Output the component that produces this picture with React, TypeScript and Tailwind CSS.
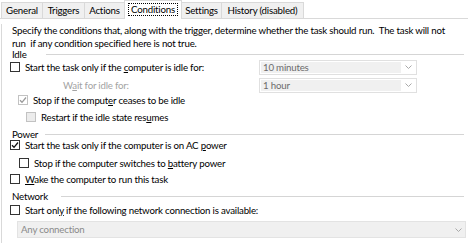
import React from 'react'

const tabs = [
  { label: 'General', w: 'w-[42px]' },
  { label: 'Triggers', w: 'w-[43px]' },
  { label: 'Actions', w: 'w-[41px]' },
  { label: 'Conditions', w: 'w-[58px]', active: true },
  { label: 'Settings', w: 'w-[41px]' },
  { label: 'History (disabled)', w: 'w-[83px]' },
]

function Box({ checked = false, disabled = false, filled = false }: { checked?: boolean; disabled?: boolean; filled?: boolean }) {
  return (
    <span
      className={`flex h-[10px] w-[10px] shrink-0 items-center justify-center border ${
        disabled ? 'border-[#c2c2c2]' : 'border-[#333333]'
      } ${filled ? 'bg-[#ececec]' : 'bg-white'}`}
    >
      {checked && (
        <svg width="8" height="8" viewBox="0 0 8 8">
          <path d="M1 4.3 L3 6.3 L7 1.5" fill="none" stroke={disabled ? '#9a9a9a' : '#111111'} strokeWidth="1.3" />
        </svg>
      )}
    </span>
  )
}

function Chevron() {
  return (
    <svg width="7" height="4" viewBox="0 0 7 4">
      <path d="M0.5 0.5 L3.5 3.5 L6.5 0.5" fill="none" stroke="#a9a9a9" strokeWidth="1" />
    </svg>
  )
}

function Combo({ value }: { value: string }) {
  return (
    <div className="ml-auto mr-[51px] flex h-[15px] w-[158px] border border-[#e0e0e0] bg-white p-[1px]">
      <div className="flex flex-1 items-center bg-[#f0f0f0] pl-[2px] text-[#6b6b6b]">{value}</div>
      <div className="flex w-[14px] items-center justify-center">
        <Chevron />
      </div>
    </div>
  )
}

function Header({ label, w }: { label: string; w: string }) {
  return (
    <div className="flex h-[10px] items-center pl-[10px] pr-[4px] leading-[10px]">
      <span className={`${w} shrink-0`}>{label}</span>
      <div className="h-px flex-1 bg-[#d5d5d5]" />
    </div>
  )
}

export default function App() {
  return (
    <div className="h-[243px] w-[468px] overflow-hidden bg-white font-['Lato',sans-serif] text-[9.7px] leading-[11px] tracking-[-0.2px] text-black">
      {/* Tabs */}
      <div className="flex h-[19px] items-end border-b border-[#d9d9d9] pl-[1px]">
        {tabs.map((t, i) =>
          t.active ? (
            <div
              key={t.label}
              className={`${t.w} relative z-10 -mb-px -ml-px flex h-[19px] items-start justify-center border-x border-t border-[#d9d9d9] bg-white pt-[2px]`}
            >
              <span className="border border-dotted border-black px-[2px] leading-[11px]">{t.label}</span>
            </div>
          ) : (
            <div
              key={t.label}
              className={`${t.w} ${i > 0 ? '-ml-px' : ''} flex h-[16px] items-center justify-center border-x border-t border-[#d9d9d9] bg-[#f0f0f0]`}
            >
              {t.label}
            </div>
          )
        )}
      </div>

      {/* Panel */}
      <div className="ml-[1px] h-[224px] border-l border-[#d9d9d9]">
        <p className="mt-[5px] whitespace-pre pl-[10px] leading-[12.5px]">
          {'Specify the conditions that, along with the trigger, determine whether the task should run.  The task will not'}
          <br />
          {'run  if any condition specified here is not true.'}
        </p>

        <Header label="Idle" w="w-[34px]" />

        <div className="flex h-[16px] items-center gap-[5px] pl-[8px]">
          <Box />
          <span>
            Start the task only if the <u>c</u>omputer is idle for:
          </span>
          <Combo value="10 minutes" />
        </div>

        <div className="mt-[2px] flex h-[16px] items-center pl-[61px]">
          <span className="text-[#a3a3a3]">
            W<u>a</u>it for idle for:
          </span>
          <Combo value="1 hour" />
        </div>

        <div className="flex h-[14px] items-center gap-[5px] pl-[16px]">
          <Box checked disabled />
          <span>
            Stop if the comput<u>e</u>r ceases to be idle
          </span>
        </div>

        <div className="mt-[2px] flex h-[16px] items-center gap-[5px] pl-[24px]">
          <Box disabled filled />
          <span>
            Restart if the idle state res<u>u</u>mes
          </span>
        </div>

        <div className="mt-[4px]">
          <Header label="Power" w="w-[33px]" />
        </div>

        <div className="flex h-[12px] items-center gap-[5px] pl-[8px]">
          <Box checked />
          <span>
            Start the task only if the computer is on AC <u>p</u>ower
          </span>
        </div>

        <div className="mt-[4px] flex h-[16px] items-center gap-[5px] pl-[17px]">
          <Box />
          <span>
            Stop if the computer switches to <u>b</u>attery power
          </span>
        </div>

        <div className="flex h-[16px] items-center gap-[5px] pl-[8px]">
          <Box />
          <span>
            <u>W</u>ake the computer to run this task
          </span>
        </div>

        <div className="mt-[4px]">
          <Header label="Network" w="w-[49px]" />
        </div>

        <div className="mt-[1px] flex h-[16px] items-center gap-[5px] pl-[8px]">
          <Box />
          <span>
            Start onl<u>y</u> if the following network connection is available:
          </span>
        </div>

        <div className="ml-[15px] mr-[2px] mt-[3px] flex h-[17px] items-center border border-[#e3e3e3] bg-[#f0f0f0] pl-[3px] text-[#8a8a8a]">
          <span className="flex-1">Any connection</span>
          <span className="pr-[3px]">
            <Chevron />
          </span>
        </div>
      </div>
    </div>
  )
}
